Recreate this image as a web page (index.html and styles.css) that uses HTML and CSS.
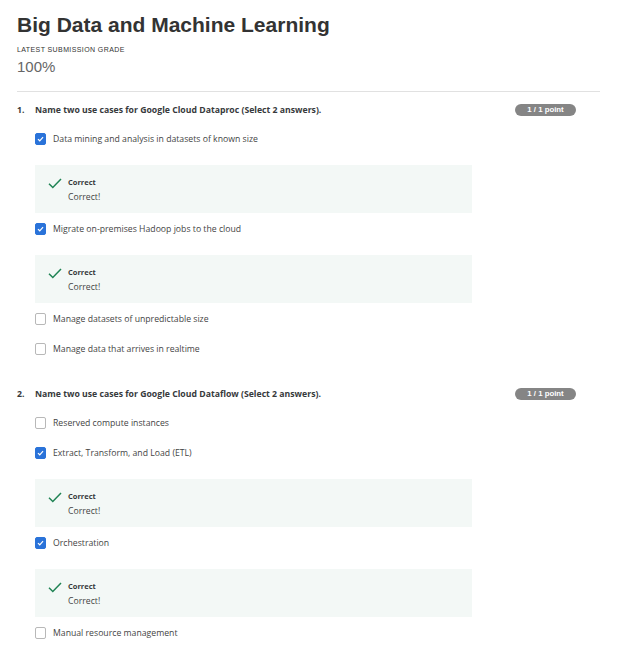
FILE: index.html
```html
<!DOCTYPE html>
<html>
<head>
<meta charset="utf-8">
<link rel="stylesheet" href="styles.css">
</head>
<body>
<div class="page">
  <h1 class="title">Big Data and Machine Learning</h1>
  <div class="grade-label">LATEST SUBMISSION GRADE</div>
  <div class="grade">100%</div>
  <hr class="divider">

  <section class="question">
    <div class="q-head">
      <span class="q-num">1.</span>
      <span class="q-text">Name two use cases for Google Cloud Dataproc (Select 2 answers).</span>
      <span class="badge">1 / 1 point</span>
    </div>
    <div class="options">
      <div class="option"><span class="box checked"><svg viewBox="0 0 12 12"><path d="M2.6 6.2 L5 8.4 L9.4 3.6" /></svg></span><span class="label">Data mining and analysis in datasets of known size</span></div>
      <div class="feedback"><svg class="tick" viewBox="0 0 14 11"><path d="M1 5.8 L4.8 9.5 L13 1" /></svg><div class="fb-text"><div class="fb-title">Correct</div><div class="fb-body">Correct!</div></div></div>
      <div class="option"><span class="box checked"><svg viewBox="0 0 12 12"><path d="M2.6 6.2 L5 8.4 L9.4 3.6" /></svg></span><span class="label">Migrate on-premises Hadoop jobs to the cloud</span></div>
      <div class="feedback"><svg class="tick" viewBox="0 0 14 11"><path d="M1 5.8 L4.8 9.5 L13 1" /></svg><div class="fb-text"><div class="fb-title">Correct</div><div class="fb-body">Correct!</div></div></div>
      <div class="option"><span class="box"></span><span class="label">Manage datasets of unpredictable size</span></div>
      <div class="option"><span class="box"></span><span class="label">Manage data that arrives in realtime</span></div>
    </div>
  </section>

  <section class="question q2">
    <div class="q-head">
      <span class="q-num">2.</span>
      <span class="q-text">Name two use cases for Google Cloud Dataflow (Select 2 answers).</span>
      <span class="badge">1 / 1 point</span>
    </div>
    <div class="options">
      <div class="option"><span class="box"></span><span class="label">Reserved compute instances</span></div>
      <div class="option"><span class="box checked"><svg viewBox="0 0 12 12"><path d="M2.6 6.2 L5 8.4 L9.4 3.6" /></svg></span><span class="label">Extract, Transform, and Load (ETL)</span></div>
      <div class="feedback"><svg class="tick" viewBox="0 0 14 11"><path d="M1 5.8 L4.8 9.5 L13 1" /></svg><div class="fb-text"><div class="fb-title">Correct</div><div class="fb-body">Correct!</div></div></div>
      <div class="option"><span class="box checked"><svg viewBox="0 0 12 12"><path d="M2.6 6.2 L5 8.4 L9.4 3.6" /></svg></span><span class="label">Orchestration</span></div>
      <div class="feedback"><svg class="tick" viewBox="0 0 14 11"><path d="M1 5.8 L4.8 9.5 L13 1" /></svg><div class="fb-text"><div class="fb-title">Correct</div><div class="fb-body">Correct!</div></div></div>
      <div class="option"><span class="box"></span><span class="label">Manual resource management</span></div>
    </div>
  </section>
</div>
</body>
</html>
```

FILE: styles.css
```css
html, body {
  margin: 0;
  padding: 0;
  background: #fff;
}
.page {
  width: 583px;
  padding: 8px 0 0 17px;
  font-family: "Open Sans", "Liberation Sans", sans-serif;
  color: #373a3c;
}
.title {
  margin: 0;
  font-family: "Liberation Sans", Arial, sans-serif;
  font-weight: bold;
  font-size: 21px;
  line-height: 34px;
  color: #333;
}
.grade-label {
  margin-top: 3px;
  font-family: "Liberation Sans", Arial, sans-serif;
  font-size: 7px;
  line-height: 10px;
  letter-spacing: 0.4px;
  color: #333;
}
.grade {
  margin-top: 3px;
  font-family: "Liberation Sans", Arial, sans-serif;
  font-size: 15px;
  line-height: 18px;
  color: #666;
}
.divider {
  margin: 15px 0 0 0;
  border: 0;
  border-top: 1px solid #e1e1e1;
  height: 0;
}
.question {
  margin-top: 8px;
}
.q2 {
  margin-top: 20px;
}
.q-head {
  display: flex;
  align-items: center;
  height: 20px;
  width: 559px;
  font-size: 8.7px;
  font-weight: 700;
  color: #373a3c;
}
.q-num {
  width: 18px;
}
.q-text {
  flex: 1;
}
.badge {
  width: 61px;
  height: 12px;
  border-radius: 6px;
  background: #858585;
  color: #fff;
  font-family: "Liberation Sans", Arial, sans-serif;
  font-size: 7.8px;
  font-weight: bold;
  line-height: 12px;
  text-align: center;
}
.options {
  margin-top: 4px;
  padding-left: 18px;
}
.option {
  display: flex;
  align-items: center;
  height: 30px;
  gap: 7px;
  font-size: 8.7px;
  color: #444;
}
.box {
  box-sizing: border-box;
  width: 11px;
  height: 12px;
  border: 1px solid #b8b8b8;
  border-radius: 2px;
  background: #fff;
  display: flex;
}
.box.checked {
  background: #2a73d9;
  border-color: #2a73d9;
}
.box svg {
  width: 100%;
  height: 100%;
}
.box svg path {
  fill: none;
  stroke: #fff;
  stroke-width: 1.6;
}
.feedback {
  box-sizing: border-box;
  width: 437px;
  height: 48px;
  margin: 11px 0 1px 0;
  background: #f3f8f6;
  display: flex;
  padding: 12px 0 0 13px;
  gap: 6px;
}
.tick {
  width: 14px;
  height: 11px;
  margin-top: 1px;
}
.tick path {
  fill: none;
  stroke: #1f8354;
  stroke-width: 1.5;
}
.fb-text {
  line-height: 15px;
  margin-top: -2px;
  color: #444;
}
.fb-title {
  font-size: 7.5px;
  font-weight: 700;
  color: #373a3c;
}
.fb-body {
  font-size: 8.7px;
}
```
